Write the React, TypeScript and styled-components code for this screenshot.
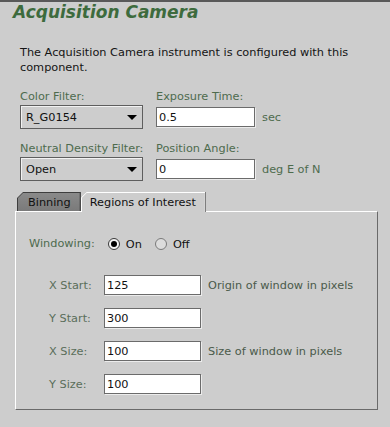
import React from 'react';
import styled, { createGlobalStyle } from 'styled-components';

const GlobalStyle = createGlobalStyle`
  html, body {
    margin: 0;
    padding: 0;
    background: #cdcdcd;
  }
  body {
    font-family: "DejaVu Sans", "Liberation Sans", sans-serif;
    font-size: 11.3px;
    color: #111;
  }
`;

const Page = styled.div`
  width: 390px;
  height: 427px;
  box-sizing: border-box;
  border-top: 2px solid #595959;
  background: #cdcdcd;
  overflow: hidden;
`;

const Title = styled.h1`
  margin: 0;
  padding-left: 13px;
  font-size: 17px;
  line-height: 20px;
  font-weight: bold;
  font-style: italic;
  color: #3d6b3d;
`;

const Body = styled.div`
  padding: 0 20px;
`;

const Description = styled.p`
  margin: 23px 0 0 0;
  line-height: 15px;
  color: #141414;
`;

const FieldGrid = styled.div`
  display: grid;
  grid-template-columns: 123px auto;
  column-gap: 13px;
  row-gap: 13px;
  margin-top: 15px;
`;

const Field = styled.div`
  display: flex;
  flex-direction: column;
  gap: 1px;
`;

const Label = styled.span`
  line-height: 14px;
  color: #4d6b4d;
  white-space: nowrap;
`;

const Combo = styled.div`
  height: 24px;
  box-sizing: border-box;
  display: flex;
  align-items: center;
  justify-content: space-between;
  padding: 0 5px 0 5px;
  border: 1px solid #5e5e5e;
  box-shadow: inset 1px 1px 0 #f2f2f2;
  background: #cdcdcd;
  color: #111;
`;

const Arrow = styled.span`
  width: 0;
  height: 0;
  border-left: 5px solid transparent;
  border-right: 5px solid transparent;
  border-top: 5px solid #000;
`;

const InputRow = styled.div`
  height: 24px;
  display: flex;
  align-items: center;
  gap: 7px;
`;

const TextField = styled.input<{ $width: number }>`
  width: ${p => p.$width}px;
  height: 20px;
  box-sizing: border-box;
  margin: 0;
  padding: 0 2px;
  border: 1px solid #6b6b6b;
  box-shadow: 1px 1px 0 #ececec;
  background: #fff;
  font: inherit;
  color: #111;
  outline: none;
`;

const Unit = styled.span`
  color: #4d6b4d;
  white-space: nowrap;
`;

const TabSection = styled.div`
  margin: 11px 12px 0 15px;
`;

const TabStrip = styled.div`
  display: flex;
  padding-left: 2px;
  align-items: flex-end;
  height: 19px;
`;

const Tab = styled.div<{ $active?: boolean }>`
  position: relative;
  z-index: ${p => (p.$active ? 2 : 1)};
  height: ${p => (p.$active ? 20 : 19)}px;
  margin-bottom: ${p => (p.$active ? -1 : 0)}px;
  box-sizing: border-box;
  padding: 1px 0 0 1px;
  background: ${p => (p.$active ? '#ffffff' : '#3e3e3e')};
  border-right: 1px solid ${p => (p.$active ? '#6a6a6a' : '#3e3e3e')};
  clip-path: polygon(6px 0, 100% 0, 100% 100%, 0 100%, 0 6px);
`;

const TabFace = styled.div<{ $active?: boolean }>`
  height: 100%;
  box-sizing: border-box;
  display: flex;
  align-items: center;
  padding: 0 9px 0 ${p => (p.$active ? 8 : 10)}px;
  background: ${p => (p.$active ? '#cdcdcd' : 'linear-gradient(#8a8a8a, #7a7a7a)')};
  color: #111;
  white-space: nowrap;
  clip-path: polygon(5px 0, 100% 0, 100% 100%, 0 100%, 0 5px);
`;

const Panel = styled.div`
  position: relative;
  z-index: 1;
  height: 199px;
  box-sizing: border-box;
  border-top: 1px solid #fff;
  border-left: 1px solid #fff;
  border-right: 1px solid #6a6a6a;
  border-bottom: 1px solid #6a6a6a;
  padding: 25px 0 0 13px;
`;

const WindowingRow = styled.div`
  display: flex;
  align-items: center;
  height: 14px;
`;

const RadioGroup = styled.div`
  display: flex;
  gap: 13px;
  margin-left: 13px;
`;

const RadioOption = styled.label`
  display: flex;
  align-items: center;
  gap: 6px;
  color: #111;
`;

const RadioDot = styled.span<{ $checked?: boolean }>`
  width: 12px;
  height: 12px;
  box-sizing: border-box;
  border-radius: 50%;
  border: 1px solid ${p => (p.$checked ? '#3a3a3a' : '#7a7a7a')};
  background: ${p => (p.$checked ? '#f4f4f4' : '#dcdcdc')};
  display: flex;
  align-items: center;
  justify-content: center;
  &::after {
    content: '';
    width: 6px;
    height: 6px;
    border-radius: 50%;
    background: ${p => (p.$checked ? '#000' : 'transparent')};
  }
`;

const RoiGrid = styled.div`
  display: grid;
  grid-template-columns: 55px 97px auto;
  row-gap: 13px;
  align-items: center;
  margin: 24px 0 0 20px;
`;

const Hint = styled.span`
  margin-left: 7px;
  color: #4a5a4a;
  white-space: nowrap;
`;

const RoiLabel = styled.span`
  color: #5a6e5a;
`;

const roiRows = [
  { label: 'X Start:', value: '125', hint: 'Origin of window in pixels' },
  { label: 'Y Start:', value: '300', hint: '' },
  { label: 'X Size:', value: '100', hint: 'Size of window in pixels' },
  { label: 'Y Size:', value: '100', hint: '' },
];

export default function App() {
  return (
    <Page>
      <GlobalStyle />
      <Title>Acquisition Camera</Title>
      <Body>
        <Description>
          The Acquisition Camera instrument is configured with this component.
        </Description>
        <FieldGrid>
          <Field>
            <Label>Color Filter:</Label>
            <Combo>
              R_G0154
              <Arrow />
            </Combo>
          </Field>
          <Field>
            <Label>Exposure Time:</Label>
            <InputRow>
              <TextField $width={99} defaultValue="0.5" readOnly />
              <Unit>sec</Unit>
            </InputRow>
          </Field>
          <Field>
            <Label>Neutral Density Filter:</Label>
            <Combo>
              Open
              <Arrow />
            </Combo>
          </Field>
          <Field>
            <Label>Position Angle:</Label>
            <InputRow>
              <TextField $width={99} defaultValue="0" readOnly />
              <Unit>deg E of N</Unit>
            </InputRow>
          </Field>
        </FieldGrid>
      </Body>
      <TabSection>
        <TabStrip>
          <Tab>
            <TabFace>Binning</TabFace>
          </Tab>
          <Tab $active>
            <TabFace $active>Regions of Interest</TabFace>
          </Tab>
        </TabStrip>
        <Panel>
          <WindowingRow>
            <Label>Windowing:</Label>
            <RadioGroup>
              <RadioOption>
                <RadioDot $checked />
                On
              </RadioOption>
              <RadioOption>
                <RadioDot />
                Off
              </RadioOption>
            </RadioGroup>
          </WindowingRow>
          <RoiGrid>
            {roiRows.map(r => (
              <React.Fragment key={r.label}>
                <RoiLabel>{r.label}</RoiLabel>
                <TextField $width={97} defaultValue={r.value} readOnly />
                {r.hint ? <Hint>{r.hint}</Hint> : <span />}
              </React.Fragment>
            ))}
          </RoiGrid>
        </Panel>
      </TabSection>
    </Page>
  );
}
